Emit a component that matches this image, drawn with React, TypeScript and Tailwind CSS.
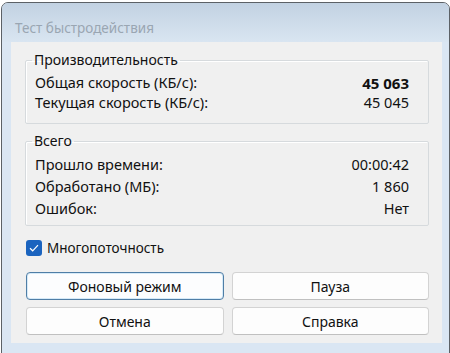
import React from "react";

const font = { fontFamily: '"Noto Sans", "DejaVu Sans", sans-serif' };

const Row = ({ label, value, bold, h }: { label: string; value: string; bold?: boolean; h: string }) => (
  <div className={`flex items-center justify-between ${h}`}>
    <span>{label}</span>
    <span className={bold ? "font-bold text-[15px]" : ""}>{value}</span>
  </div>
);

const App = () => {
  const perf = [
    { label: "Общая скорость (КБ/с):", value: "45 063", bold: true },
    { label: "Текущая скорость (КБ/с):", value: "45 045" },
  ];
  const total = [
    { label: "Прошло времени:", value: "00:00:42" },
    { label: "Обработано (МБ):", value: "1 860" },
    { label: "Ошибок:", value: "Нет" },
  ];

  return (
    <div className="w-[450px] h-[353px] bg-white pl-[1px] pt-[2px] overflow-hidden" style={font}>
      {/* window */}
      <div className="w-[449px] h-[360px] border border-[#5c6166] rounded-t-[7px] flex flex-col bg-[#dae6f3] overflow-hidden">
        {/* title bar */}
        <div className="h-[39px] shrink-0 flex items-center pt-[11px] pl-[13px] bg-gradient-to-b from-[#c2d2e2] to-[#d9e5f1]">
          <span className="text-[13.5px] text-[#9aa6b2]">Тест быстродействия</span>
        </div>
        {/* frame */}
        <div className="pl-[9px] pr-[7px]">
          <div className="h-[301px] bg-[#f0f0f0] pt-[8px] pl-[14px] pr-[13px] text-[14.5px] text-[#111]">
            {/* performance group */}
            <fieldset className="border border-[#d6dadd] rounded-[2px] pl-[9px] pr-[19px] pt-[3px] pb-[10px] shadow-[inset_1px_1px_0_#fff]">
              <legend className="ml-[-3px] px-[2px] h-[20px] leading-[20px] text-[14px]">Производительность</legend>
              {perf.map((r) => (
                <Row key={r.label} {...r} h="h-[20px]" />
              ))}
            </fieldset>
            {/* totals group */}
            <fieldset className="mt-[7px] border border-[#d6dadd] rounded-[2px] pl-[9px] pr-[19px] pt-[3px] pb-[5px] shadow-[inset_1px_1px_0_#fff]">
              <legend className="ml-[-3px] px-[2px] h-[20px] leading-[20px] text-[14px]">Всего</legend>
              {total.map((r) => (
                <Row key={r.label} {...r} h="h-[22px]" />
              ))}
            </fieldset>
            {/* checkbox */}
            <label className="mt-[12px] h-[20px] flex items-center gap-[5px] pl-[1px] text-[13.5px]">
              <span className="w-[16px] h-[16px] rounded-[3px] bg-[#1b64bf] flex items-center justify-center">
                <svg width="10" height="8" viewBox="0 0 10 8" fill="none">
                  <path d="M1 4.2 L3.7 6.8 L9 1.2" stroke="#fff" strokeWidth="1.2" />
                </svg>
              </span>
              Многопоточность
            </label>
            {/* buttons */}
            <div className="mt-[14px] ml-[1px] grid grid-cols-2 gap-x-[8px] gap-y-[7px] text-[14px]">
              <button className="h-[28px] rounded-[4px] border border-[#4f7ea6] bg-[#fcfdfe] shadow-[inset_0_0_0_1px_#d6eaf8]">Фоновый режим</button>
              <button className="h-[28px] rounded-[4px] border border-[#d3d3d3] border-b-[#c0c0c0] bg-[#fdfdfd]">Пауза</button>
              <button className="h-[28px] rounded-[4px] border border-[#d3d3d3] border-b-[#c0c0c0] bg-[#fdfdfd]">Отмена</button>
              <button className="h-[28px] rounded-[4px] border border-[#d3d3d3] border-b-[#c0c0c0] bg-[#fdfdfd]">Справка</button>
            </div>
          </div>
        </div>
      </div>
    </div>
  );
};

export default App;
